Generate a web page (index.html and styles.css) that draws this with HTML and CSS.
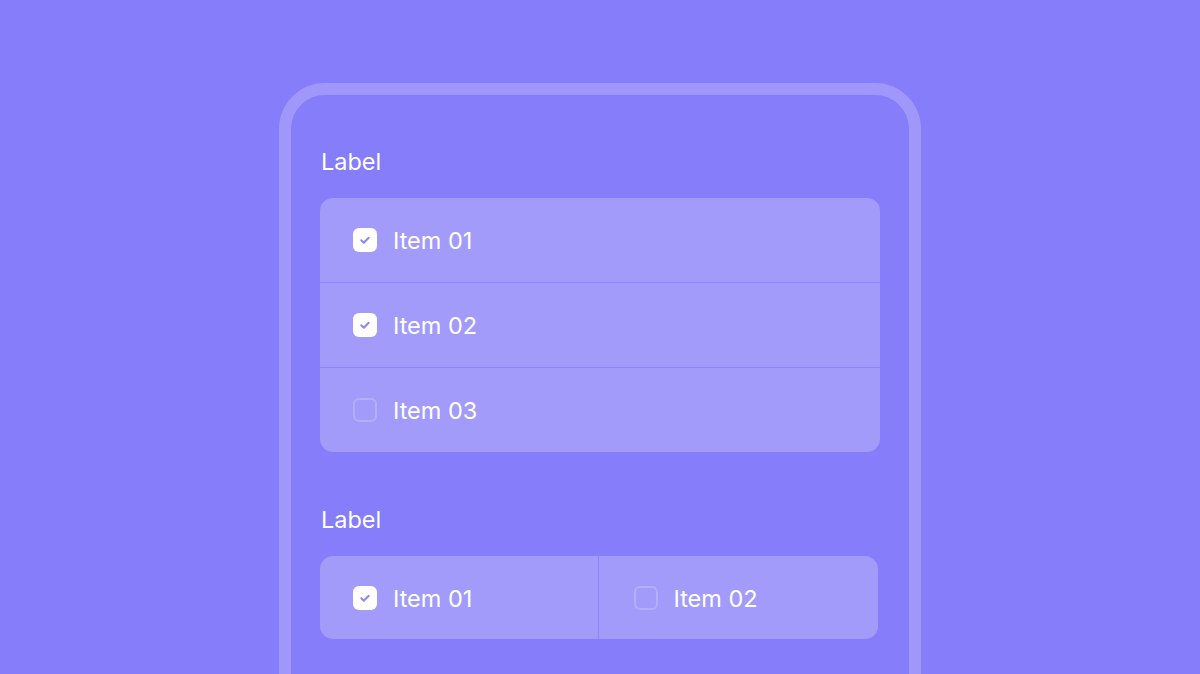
FILE: index.html
```html
<!DOCTYPE html>
<html lang="en">
<head>
<meta charset="utf-8">
<title>Checkbox group</title>
<link rel="stylesheet" href="styles.css">
</head>
<body>
<main class="stage">
  <section class="frame">
    <div class="group">
      <div class="label">Label</div>
      <div class="list">
        <label class="item">
          <span class="box checked"><svg viewBox="0 0 24 24" width="24" height="24"><path d="M8.3 12.3 L10.8 14.7 L15.7 9.8" fill="none" stroke="#8d85f2" stroke-width="2" stroke-linecap="round" stroke-linejoin="round"/></svg></span>
          <span class="text">Item 01</span>
        </label>
        <label class="item">
          <span class="box checked"><svg viewBox="0 0 24 24" width="24" height="24"><path d="M8.3 12.3 L10.8 14.7 L15.7 9.8" fill="none" stroke="#8d85f2" stroke-width="2" stroke-linecap="round" stroke-linejoin="round"/></svg></span>
          <span class="text">Item 02</span>
        </label>
        <label class="item">
          <span class="box"></span>
          <span class="text">Item 03</span>
        </label>
      </div>
    </div>
    <div class="group">
      <div class="label">Label</div>
      <div class="list row">
        <label class="item">
          <span class="box checked"><svg viewBox="0 0 24 24" width="24" height="24"><path d="M8.3 12.3 L10.8 14.7 L15.7 9.8" fill="none" stroke="#8d85f2" stroke-width="2" stroke-linecap="round" stroke-linejoin="round"/></svg></span>
          <span class="text">Item 01</span>
        </label>
        <label class="item">
          <span class="box"></span>
          <span class="text">Item 02</span>
        </label>
      </div>
    </div>
  </section>
</main>
</body>
</html>
```

FILE: styles.css
```css
html, body {
  margin: 0;
  padding: 0;
  height: 100%;
  overflow: hidden;
}
body {
  background: #857df9;
  font-family: Inter, "Noto Sans", sans-serif;
  color: #ffffff;
}
.stage {
  display: flex;
  justify-content: center;
  padding-top: 83px;
}
.frame {
  box-sizing: border-box;
  width: 642px;
  min-height: 700px;
  border: 12px solid #9f98fa;
  border-radius: 46px;
  padding: 53px 29px 40px;
  display: flex;
  flex-direction: column;
  gap: 54px;
}
.group {
  display: flex;
  flex-direction: column;
  gap: 22px;
}
.label {
  font-size: 23.5px;
  line-height: 28px;
  padding-left: 1px;
}
.list {
  background: #a29bfa;
  border-radius: 13px;
  display: flex;
  flex-direction: column;
  overflow: hidden;
}
.item {
  height: 84px;
  display: flex;
  align-items: center;
  gap: 16px;
  padding-left: 33px;
  font-size: 23.5px;
}
.list .item + .item {
  border-top: 1px solid #8c84f8;
}
.list.row {
  flex-direction: row;
  width: 558px;
}
.list.row .item {
  flex: 1;
  height: 83px;
}
.list.row .item + .item {
  border-top: none;
  border-left: 1px solid #8c84f8;
  padding-left: 35px;
}
.box {
  width: 24px;
  height: 24px;
  box-sizing: border-box;
  border-radius: 6px;
  border: 2px solid #b5aefc;
  display: flex;
}
.box.checked {
  background: #ffffff;
  border: none;
}
.text {
  line-height: 28px;
  padding-top: 2px;
}
```
